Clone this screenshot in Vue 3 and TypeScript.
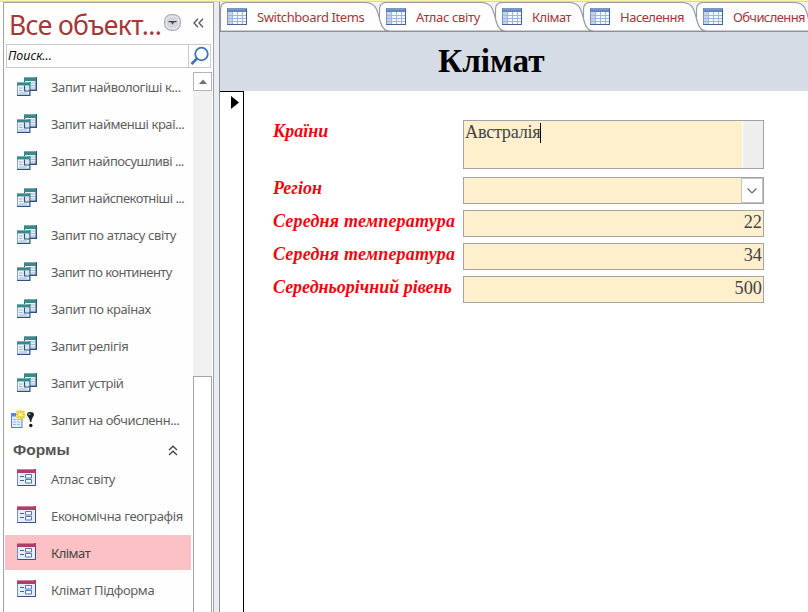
<script setup lang="ts">
interface NavItem { label: string; kind: 'query' | 'make' | 'form'; ls: number; active?: boolean }
interface Tab { label: string; width: number; ls: number }
interface Field { label: string; value: string; kind: 'memo' | 'combo' | 'number'; ls: number }

const queries: NavItem[] = [
  { label: 'Запит найвологіші к...', kind: 'query', ls: -0.4 },
  { label: 'Запит найменші краї...', kind: 'query', ls: -0.43 },
  { label: 'Запит найпосушливі ...', kind: 'query', ls: -0.5 },
  { label: 'Запит найспекотніші ...', kind: 'query', ls: -0.52 },
  { label: 'Запит по атласу світу', kind: 'query', ls: -0.38 },
  { label: 'Запит по континенту', kind: 'query', ls: -0.55 },
  { label: 'Запит по країнах', kind: 'query', ls: -0.4 },
  { label: 'Запит релігія', kind: 'query', ls: -0.42 },
  { label: 'Запит устрій', kind: 'query', ls: -0.47 },
  { label: 'Запит на обчисленн...', kind: 'make', ls: -0.43 },
]
const forms: NavItem[] = [
  { label: 'Атлас світу', kind: 'form', ls: -0.35 },
  { label: 'Економічна географія', kind: 'form', ls: -0.33 },
  { label: 'Клімат', kind: 'form', ls: -0.5, active: true },
  { label: 'Клімат Підформа', kind: 'form', ls: -0.37 },
]
const groups = [
  { title: '', items: queries },
  { title: 'Формы', items: forms },
]
const tabs: Tab[] = [
  { label: 'Switchboard Items', width: 159, ls: -0.4 },
  { label: 'Атлас світу', width: 116, ls: -0.36 },
  { label: 'Клімат', width: 88, ls: -0.55 },
  { label: 'Населення', width: 113, ls: -0.5 },
  { label: 'Обчислення', width: 112, ls: -0.6 },
]
const fields: Field[] = [
  { label: 'Країни', value: 'Австралія', kind: 'memo', ls: 0 },
  { label: 'Регіон', value: '', kind: 'combo', ls: 0 },
  { label: 'Середня температура', value: '22', kind: 'number', ls: 0.2 },
  { label: 'Середня температура', value: '34', kind: 'number', ls: 0.2 },
  { label: 'Середньорічний рівень', value: '500', kind: 'number', ls: 0 },
]
const tabPath = (w: number): string =>
  `M.5 29V8Q.5 .5 7 .5H${w - 15}C${w - 3} .5 ${w - 2} 8 ${w} 15C${w + 2} 23 ${w + 4} 28.5 ${w + 10} 29Z`
</script>

<template>
  <div class="app">
    <div class="strip"></div>
    <div class="body">
      <aside class="nav">
        <header class="nav-head">
          <h2>Все объект...</h2>
          <svg class="round" width="17" height="17" viewBox="0 0 17 17">
            <rect x=".7" y=".7" width="15.6" height="15.6" rx="6" fill="#d5d6dd" stroke="#9c9ea8" />
            <rect x="2.2" y="2.2" width="12.6" height="12.6" rx="5" fill="none" stroke="#eeeef3" />
            <path d="M4.500 7h8v1.200h-2.500l-1.500 2.600-1.500-2.600h-2.500z" fill="#44464f" />
          </svg>
          <svg class="shutter" width="11" height="10" viewBox="0 0 11 10">
            <path d="M5 .8 1 5l4 4.200M10 .8 6 5l4 4.200" fill="none" stroke="#555" stroke-width="1.3" />
          </svg>
        </header>
        <div class="search">
          <span>Поиск...</span>
          <i>
            <svg width="20" height="20" viewBox="0 0 20 20">
              <circle cx="11.500" cy="8" r="6.300" fill="#fff" stroke="#3e74b5" stroke-width="1.800" />
              <path d="M7 12.500 1.500 18" stroke="#3e74b5" stroke-width="2.600" />
            </svg>
          </i>
        </div>
        <div class="nav-main">
          <div class="list">
            <section v-for="g in groups" :key="g.title">
              <div v-if="g.title" class="group">
                <b>{{ g.title }}</b>
                <svg width="10" height="11" viewBox="0 0 10 11">
                  <path d="M1 5 5 1.200 9 5M1 10 5 6.200 9 10" fill="none" stroke="#444" stroke-width="1.300" />
                </svg>
              </div>
              <div v-for="it in g.items" :key="it.label" class="item" :class="[it.kind, { active: it.active }]">
                <svg v-if="it.kind === 'query'" class="ico" width="20" height="19" viewBox="0 0 20 19">
                  <rect x="7" y="0" width="13" height="14" fill="#2f5379" />
                  <rect x="7" y="0" width="12" height="4" fill="#3c8787" />
                  <path d="M7 .5h12" stroke="#75a9aa" />
                  <rect x="8" y="4" width="10.500" height="8.500" fill="#e8f1fa" />
                  <path d="M14 6h4M14 8.500h4M14 11h4" stroke="#a3bad8" />
                  <rect x="0" y="5" width="13.500" height="14" fill="#2f5379" />
                  <rect x="0" y="5" width="12.500" height="13" fill="#86a5c4" />
                  <rect x="0" y="5" width="13" height="3.500" fill="#3c8787" />
                  <path d="M0 5.500h12" stroke="#79b3b0" />
                  <rect x="1" y="8.500" width="11" height="9" fill="#eaf3fb" />
                  <path d="M2 11h3.500M2 13.500h3.500M2 16h8" stroke="#9cb5d3" />
                  <path d="M7.500 8.500v5.500h5.500" fill="none" stroke="#2f5379" stroke-width="1.200" />
                  <path d="M8.500 10h4M8.500 12.200h4" stroke="#c4d4e8" />
                </svg>
                <svg v-else-if="it.kind === 'make'" class="ico wide" width="25" height="18" viewBox="0 0 25 18">
                  <rect x=".5" y="3.500" width="10.500" height="14" fill="#e2edfa" stroke="#5b80ba" />
                  <rect x="0" y="3" width="11" height="3.500" fill="#5a8bd2" />
                  <path d="M2 9.500h7M2 12h7M2 14.500h7" stroke="#9bb6dc" stroke-dasharray="3 1" />
                  <path d="M5 .5h9v8H5z" fill="#f7e45a" />
                  <path d="M9.500 0v9M5 4.500h9M6 1l7 7M13 1 6 8" stroke="#dfbd2c" />
                  <circle cx="9.500" cy="4.500" r="1.800" fill="#fff8b5" />
                  <path d="M16 4.500C16 2.500 17.500 2 19.500 2s3.500.8 3.500 2.500c0 2-2.200 3-2.700 7.500h-1.200c-.3-4.500-3.100-5.500-3.100-7.500z" fill="#20222b" />
                  <circle cx="19.800" cy="15.500" r="1.700" fill="#171820" />
                  <circle cx="18.300" cy="4.200" r="1.100" fill="#8f929e" />
                </svg>
                <svg v-else class="ico" width="19" height="17" viewBox="0 0 19 17">
                  <rect x=".5" y=".5" width="18" height="16" fill="#e4edfb" stroke="#7c8dab" />
                  <path d="M18.500 3v13.500H.5" fill="none" stroke="#3f5478" />
                  <rect x="0" y="0" width="19" height="4" fill="#b23e66" />
                  <path d="M0 .5h17" stroke="#cf8099" />
                  <path d="M3 7.500h4M3 11.500h4" stroke="#4c618c" />
                  <path d="M8.500 5.500h6v3.500h-6zM8.500 10.500h6v3.500h-6z" fill="#f5f9ff" stroke="#5b75a8" />
                </svg>
                <span :style="{ letterSpacing: it.ls + 'px' }">{{ it.label }}</span>
              </div>
            </section>
          </div>
          <div class="scroll">
            <div class="up"><svg width="8" height="5" viewBox="0 0 8 5"><path d="M0 5 4 .5 8 5z" fill="#707070" /></svg></div>
            <div class="track"></div>
            <div class="thumb"></div>
          </div>
        </div>
      </aside>
      <div class="splitter"></div>
      <main class="main">
        <nav class="tabs">
          <div v-for="(t, i) in tabs" :key="t.label" class="tab" :style="{ width: t.width + 'px', zIndex: 10 - i }">
            <svg class="shape" :width="t.width + 12" height="29">
              <path :d="tabPath(t.width)" fill="#fefefe" stroke="#989ca4" stroke-width="1.200" />
            </svg>
            <svg class="tico" width="20" height="17" viewBox="0 0 20 17">
              <rect x=".5" y=".5" width="19" height="16" fill="#f3f8ff" stroke="#7c93bf" />
              <rect x="0" y="0" width="20" height="4" fill="#6485c2" />
              <path d="M1 1h18" stroke="#8fa9dc" />
              <rect x="1" y="4" width="4" height="12" fill="#c3d4ee" />
              <path d="M5.500 4v12M10.500 4v12M15.500 4v12M1 7.500h18M1 10.500h18M1 13.500h18" stroke="#a0b5d9" />
              <path d="M0 16.500h20M19.500 1v16" stroke="#48628f" />
            </svg>
            <span :style="{ letterSpacing: t.ls + 'px' }">{{ t.label }}</span>
          </div>
        </nav>
        <div class="title"><h1>Клімат</h1></div>
        <div class="record">
          <div class="selector">
            <svg width="8" height="13" viewBox="0 0 8 13"><path d="M0 0v13l8-6.500z" fill="#000" /></svg>
          </div>
          <form class="fields">
            <div v-for="(f, i) in fields" :key="i" class="row">
              <label :style="{ letterSpacing: f.ls + 'px' }">{{ f.label }}</label>
              <div class="box" :class="f.kind">
                <span>{{ f.value }}</span><i v-if="f.kind === 'memo'" class="caret"></i>
                <div v-if="f.kind === 'memo'" class="gutter"></div>
                <div v-if="f.kind === 'combo'" class="drop">
                  <svg width="10" height="6" viewBox="0 0 10 6"><path d="M.5 .5 5 5 9.500 .5" fill="none" stroke="#666" stroke-width="1.200" /></svg>
                </div>
              </div>
            </div>
          </form>
        </div>
      </main>
    </div>
  </div>
</template>

<style>
body { margin: 0; overflow: hidden; }
</style>

<style scoped>
* { box-sizing: border-box; }
.app { width: 808px; height: 612px; display: flex; flex-direction: column; background: #fff; overflow: hidden; font-family: "Noto Sans", sans-serif; }
.strip { height: 2px; flex: none; background: #faf6a6; border-bottom: 1px solid #dcd9a0; }
.body { flex: 1; display: flex; min-height: 0; }
.nav { width: 211px; margin-left: 3px; flex: none; display: flex; flex-direction: column; border: 1px solid #a0a2a8; border-bottom: 0; background: #fefefe; }
.nav-head { height: 41px; flex: none; display: flex; align-items: flex-start; }
h2 { margin: 0; padding-left: 5px; width: 160px; font-size: 26.5px; letter-spacing: -0.65px; line-height: 44px; font-weight: 400; color: #a4373a; white-space: nowrap; }
.round { margin-top: 11px; flex: none; }
.shutter { margin: 15px 0 0 12px; flex: none; }
.search { height: 24px; flex: none; margin: 0 2px; display: flex; border: 1px solid #c9cacc; font-size: 12.5px; font-style: italic; color: #111; line-height: 21px; }
.search span { flex: 1; padding-left: 1px; }
.search i { width: 22px; border-left: 1px solid #c9cacc; display: flex; align-items: center; justify-content: center; }
.nav-main { flex: 1; min-height: 0; display: flex; padding-top: 1px; }
.list { width: 189px; overflow: hidden; }
.item { height: 35px; margin: 0 2px 2px 1px; padding-left: 12px; display: flex; font-size: 13px; line-height: 36px; color: #5e5e5e; white-space: nowrap; }
.item span { display: block; }
.ico { flex: none; margin: 8px 14px 0 0; }
.form .ico { margin-right: 15px; }
.make { padding-left: 6px; }
.make .ico { margin-right: 15px; }
.active { background: #fcc1c4; color: #444; }
.group { height: 22px; display: flex; align-items: center; justify-content: space-between; padding: 0 15px 0 9px; color: #555; font-size: 15.5px; line-height: 22px; }
.group b { font-family: "Liberation Sans", sans-serif; }
.scroll { width: 19px; margin-top: 3px; display: flex; flex-direction: column; }
.up { height: 19px; flex: none; border: 1px solid #b5b5b5; display: flex; align-items: center; justify-content: center; }
.track { height: 285px; flex: none; background: #f1f1f1; }
.thumb { flex: 1; border: 1px solid #a5a5a5; border-bottom: 0; background: #fff; }
.splitter { width: 6px; flex: none; background: #ecedf2; border-right: 1px solid #8d9097; }
.main { flex: 1; min-width: 0; display: flex; flex-direction: column; overflow: hidden; }
.tabs { height: 30px; flex: none; display: flex; border-bottom: 1px solid #8b8f96; background: #f3f4f5; }
.tab { position: relative; flex: none; display: flex; padding-left: 7px; font-size: 13px; line-height: 30px; color: #a4373a; white-space: nowrap; }
.shape { position: absolute; left: 0; top: 0; }
.tico { position: relative; flex: none; margin: 6px 10px 0 0; }
.tab span { position: relative; }
.title { height: 59px; flex: none; background: #d6dce5; padding-left: 218px; font-family: "Liberation Serif", serif; }
h1 { margin: 0; font-size: 33.3px; line-height: 57px; font-weight: 700; color: #000; }
.record { flex: 1; display: flex; min-height: 0; }
.selector { width: 24px; flex: none; border: solid #000; border-width: 1px 1px 0 0; padding: 4px 0 0 11px; }
.selector svg { display: block; }
.fields { padding: 29px 0 0 29px; display: flex; flex-direction: column; gap: 6px; font-family: "Liberation Serif", serif; }
.row { display: flex; }
label { width: 190px; font-size: 18px; line-height: 23px; font-weight: 700; font-style: italic; color: #ee0710; white-space: nowrap; }
.box { width: 301px; height: 27px; border: 1px solid #a3a3a3; background: #fff0cd; display: flex; font-size: 18.3px; line-height: 23px; color: #444; }
.memo { height: 49px; margin-bottom: 2px; padding-left: 1px; }
.memo span { letter-spacing: -0.3px; }
.caret { width: 1px; height: 20px; margin-top: 2px; background: #000; }
.gutter { margin-left: auto; width: 21px; background: #eee; border-left: 1px solid #fff; }
.combo { justify-content: flex-end; }
.drop { width: 22px; border: 1px solid #c5c5c5; background: #fff; display: flex; align-items: center; justify-content: center; }
.number { justify-content: flex-end; padding-right: 1px; }
</style>
